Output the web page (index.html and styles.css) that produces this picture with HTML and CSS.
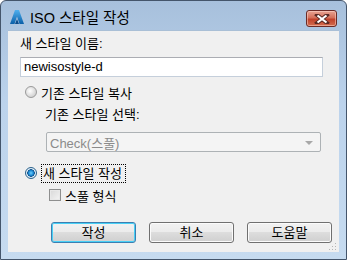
FILE: index.html
```html
<!DOCTYPE html>
<html lang="ko">
<head>
    <meta charset="UTF-8">
    <title>ISO 스타일 작성</title>
    <link rel="stylesheet" href="styles.css">
</head>
<body>
    <div class="window">
        <div class="titlebar">
            <svg class="app-icon" width="14" height="14" viewBox="0 0 14 14">
                <defs>
                    <linearGradient id="gA" x1="0" y1="0" x2="0" y2="1">
                        <stop offset="0" stop-color="#4fb0ee"/>
                        <stop offset="1" stop-color="#0a5fa8"/>
                    </linearGradient>
                </defs>
                <polygon points="5,0 9,0 14,14 9.5,14 7,6.5 4.5,14 0,14" fill="url(#gA)"/>
                <polygon points="7,9 9,14 5,14" fill="#0b4c8c"/>
            </svg>
            <span class="title">ISO 스타일 작성</span>
            <div class="close-btn">
                <svg width="16" height="10" viewBox="0 0 16 10">
                    <path d="M3 1 L13 9 M13 1 L3 9" stroke="#5a2a24" stroke-width="4" stroke-linecap="square"/>
                    <path d="M3.5 1.5 L12.5 8.5 M12.5 1.5 L3.5 8.5" stroke="#ffffff" stroke-width="2.2"/>
                </svg>
            </div>
        </div>
        <div class="client">
            <div class="label">새 스타일 이름:</div>
            <div class="textbox">newisostyle-d</div>

            <div class="option row-copy">
                <span class="radio"></span>
                <span>기존 스타일 복사</span>
            </div>
            <div class="label sub">기존 스타일 선택:</div>
            <div class="combo">
                <span>Check(스풀)</span>
                <span class="arrow"></span>
            </div>

            <div class="option row-new">
                <span class="radio checked"></span>
                <span class="focus">새 스타일 작성</span>
            </div>
            <div class="option row-check">
                <span class="checkbox"></span>
                <span>스풀 형식</span>
            </div>

            <div class="buttons">
                <button class="btn default">작성</button>
                <button class="btn">취소</button>
                <button class="btn">도움말</button>
            </div>
            <div class="grip"></div>
        </div>
    </div>
</body>
</html>
```

FILE: styles.css
```css
body {
    margin: 0;
    font-family: "Liberation Sans", "Noto Sans CJK KR", sans-serif;
    font-size: 13px;
    color: #000;
    background: #fff;
}

.window {
    width: 347px;
    height: 260px;
    box-sizing: border-box;
    border: 1px solid #44556b;
    border-radius: 6px 6px 0 0;
    background: linear-gradient(#a7c0dc, #bcd3ec 40%, #c6dbf0);
    display: flex;
    flex-direction: column;
}

.titlebar {
    height: 29px;
    display: flex;
    align-items: center;
    padding-left: 9px;
    position: relative;
}

.app-icon {
    margin-right: 6px;
    margin-top: 2px;
}

.title {
    font-size: 14.5px;
    margin-top: 2px;
    color: #000;
}

.close-btn {
    position: absolute;
    right: 9px;
    top: 9px;
    width: 31px;
    height: 17px;
    box-sizing: border-box;
    border: 1px solid #6b2b26;
    border-radius: 3px;
    background: linear-gradient(#e8a493, #d4705a 45%, #c0412a 55%, #d36d50);
    display: flex;
    align-items: center;
    justify-content: center;
    box-shadow: inset 0 0 0 1px rgba(255, 220, 210, 0.5);
}

.client {
    margin: 0 7px;
    height: 222px;
    background: #f0f0f0;
    border-top: 1px solid #a9bfd6;
    box-sizing: border-box;
    padding: 5px 0 0 12px;
    position: relative;
}

.label {
    height: 15px;
    line-height: 15px;
}

.label.sub {
    margin-left: 25px;
    margin-top: 6px;
}

.textbox {
    margin-top: 6px;
    width: 303px;
    height: 20px;
    box-sizing: border-box;
    border: 1px solid #c5cfdb;
    border-top-color: #abadb3;
    background: #fff;
    padding-left: 3px;
    line-height: 18px;
}

.option {
    display: flex;
    align-items: center;
    gap: 4px;
    height: 18px;
}

.row-copy {
    margin-top: 6px;
    margin-left: 5px;
}

.row-new {
    margin-top: 12px;
    margin-left: 5px;
}

.row-check {
    margin-top: 4px;
    margin-left: 29px;
}

.radio {
    width: 12px;
    height: 12px;
    box-sizing: border-box;
    border-radius: 50%;
    border: 1px solid #9a9a9a;
    background: radial-gradient(circle at 40% 40%, #ffffff, #dadada 60%, #c4c4c4);
}

.radio.checked {
    border-color: #2c628b;
    background: radial-gradient(circle, #6fd1ff 0, #1a86d0 2.5px, #0c4f8a 3.5px, #e6f2fa 4px, #c7dcee);
}

.focus {
    border: 1px dotted #000;
    padding: 0 3px 0 1px;
    height: 17px;
    line-height: 17px;
}

.checkbox {
    width: 12px;
    height: 12px;
    box-sizing: border-box;
    border: 1px solid #8e8f8f;
    background: linear-gradient(135deg, #d8d8d8, #f4f4f4);
    box-shadow: inset 0 0 0 1px #e8e8e8;
}

.combo {
    margin-top: 10px;
    margin-left: 26px;
    width: 275px;
    height: 20px;
    box-sizing: border-box;
    border: 1px solid #adb2b5;
    border-radius: 2px;
    background: #f4f4f4;
    color: #8b8b8b;
    display: flex;
    align-items: center;
    justify-content: space-between;
    padding: 0 7px 0 3px;
}

.arrow {
    width: 0;
    height: 0;
    border-left: 4px solid transparent;
    border-right: 4px solid transparent;
    border-top: 4px solid #a8a8a8;
    margin-top: 2px;
}

.buttons {
    display: flex;
    gap: 13px;
    margin-top: 18px;
    margin-left: 31px;
}

.btn {
    width: 85px;
    height: 21px;
    box-sizing: border-box;
    border: 1px solid #707070;
    border-radius: 3px;
    background: linear-gradient(#f2f2f2, #ebebeb 50%, #dddddd 50%, #cfcfcf);
    font-family: inherit;
    font-size: 13px;
    padding: 0;
    line-height: 18px;
    color: #000;
    box-shadow: inset 0 0 0 1px #fbfbfb;
}

.btn.default {
    border-color: #3c7fb1;
    box-shadow: inset 0 0 0 1px #48d0f6;
}

.grip {
    position: absolute;
    right: 3px;
    bottom: 2px;
    width: 8px;
    height: 8px;
    background:
        radial-gradient(circle, #b5b5b5 0.8px, transparent 1px) 0 0 / 3px 3px;
    clip-path: polygon(100% 0, 100% 100%, 0 100%);
}
```
